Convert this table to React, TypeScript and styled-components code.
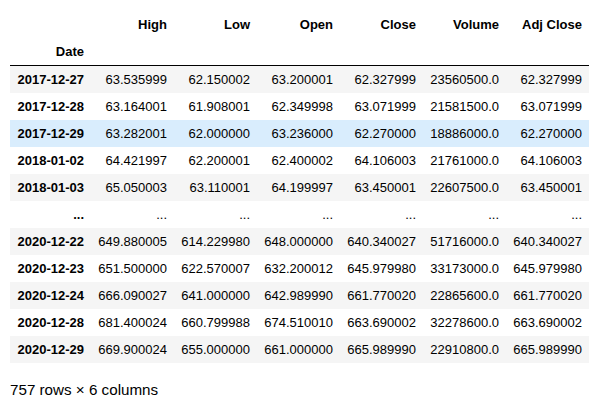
import React from "react";
import styled, { createGlobalStyle } from "styled-components";

const Global = createGlobalStyle`
  html, body { margin: 0; padding: 0; background: #fff; }
  body { font-family: "Liberation Sans", Arial, sans-serif; color: #000; }
`;

const Output = styled.div`
  padding: 11px 0 0 10px;
`;

const Table = styled.table`
  border-collapse: collapse;
  border-spacing: 0;
  table-layout: fixed;
  width: 579px;
  font-size: 13px;
  line-height: 14px;
`;

const Col = styled.col<{ $w: number }>`
  width: ${(p) => p.$w}px;
`;

const Head = styled.thead`
  border-bottom: 1px solid #000;
`;

const HeadCell = styled.th`
  text-align: right;
  font-weight: bold;
  padding: 6.5px 7px;
  white-space: nowrap;
`;

const Row = styled.tr<{ $bg: string }>`
  background: ${(p) => p.$bg};
`;

const IndexCell = styled.th`
  text-align: right;
  font-weight: bold;
  padding: 6.5px 7px;
  white-space: nowrap;
`;

const Cell = styled.td`
  text-align: right;
  padding: 6.5px 7px;
  white-space: nowrap;
`;

const Footer = styled.p`
  margin: 18px 0 0 0;
  font-size: 15.2px;
  line-height: 17px;
`;

const columns = ["High", "Low", "Open", "Close", "Volume", "Adj Close"];

const rows: [string, string[]][] = [
  ["2017-12-27", ["63.535999", "62.150002", "63.200001", "62.327999", "23560500.0", "62.327999"]],
  ["2017-12-28", ["63.164001", "61.908001", "62.349998", "63.071999", "21581500.0", "63.071999"]],
  ["2017-12-29", ["63.282001", "62.000000", "63.236000", "62.270000", "18886000.0", "62.270000"]],
  ["2018-01-02", ["64.421997", "62.200001", "62.400002", "64.106003", "21761000.0", "64.106003"]],
  ["2018-01-03", ["65.050003", "63.110001", "64.199997", "63.450001", "22607500.0", "63.450001"]],
  ["...", ["...", "...", "...", "...", "...", "..."]],
  ["2020-12-22", ["649.880005", "614.229980", "648.000000", "640.340027", "51716000.0", "640.340027"]],
  ["2020-12-23", ["651.500000", "622.570007", "632.200012", "645.979980", "33173000.0", "645.979980"]],
  ["2020-12-24", ["666.090027", "641.000000", "642.989990", "661.770020", "22865600.0", "661.770020"]],
  ["2020-12-28", ["681.400024", "660.799988", "674.510010", "663.690002", "32278600.0", "663.690002"]],
  ["2020-12-29", ["669.900024", "655.000000", "661.000000", "665.989990", "22910800.0", "665.989990"]],
];

const HOVER_ROW = 2;

export default function App() {
  return (
    <>
      <Global />
      <Output>
        <Table>
          <colgroup>
            <Col $w={81} />
            {columns.map((c) => (
              <Col key={c} $w={83} />
            ))}
          </colgroup>
          <Head>
            <tr>
              <HeadCell />
              {columns.map((c) => (
                <HeadCell key={c}>{c}</HeadCell>
              ))}
            </tr>
            <tr>
              <HeadCell>Date</HeadCell>
              {columns.map((c) => (
                <HeadCell key={c} />
              ))}
            </tr>
          </Head>
          <tbody>
            {rows.map(([date, vals], i) => (
              <Row
                key={date + i}
                $bg={i === HOVER_ROW ? "#d9edfd" : i % 2 === 0 ? "#f5f5f5" : "#ffffff"}
              >
                <IndexCell>{date}</IndexCell>
                {vals.map((v, j) => (
                  <Cell key={j}>{v}</Cell>
                ))}
              </Row>
            ))}
          </tbody>
        </Table>
        <Footer>757 rows × 6 columns</Footer>
      </Output>
    </>
  );
}
